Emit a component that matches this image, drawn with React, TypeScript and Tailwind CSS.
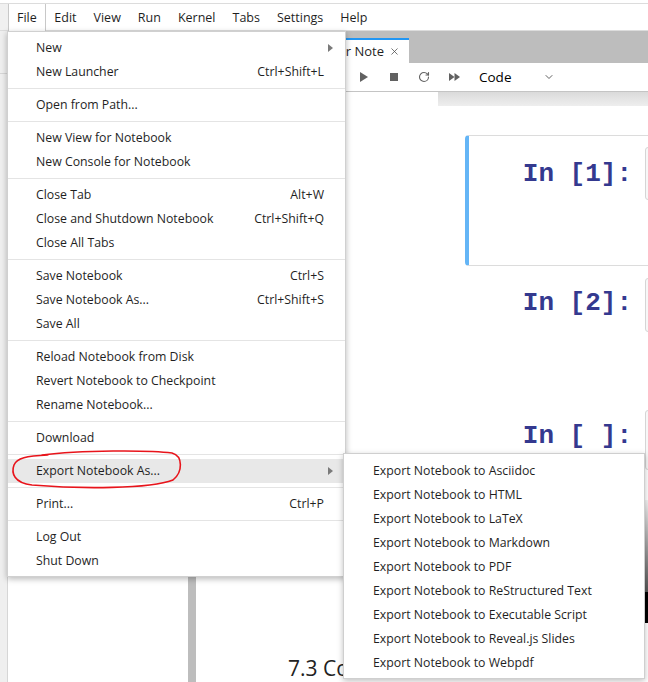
import { RotateCw, ChevronDown, X, Save, Plus, Scissors, Copy, Clipboard } from "lucide-react";

const menuBar = ["Edit", "View", "Run", "Kernel", "Tabs", "Settings", "Help"];

type Item = { label: string; shortcut?: string; submenu?: boolean; active?: boolean } | "sep";

const fileMenu: Item[] = [
  { label: "New", submenu: true },
  { label: "New Launcher", shortcut: "Ctrl+Shift+L" },
  "sep",
  { label: "Open from Path..." },
  "sep",
  { label: "New View for Notebook" },
  { label: "New Console for Notebook" },
  "sep",
  { label: "Close Tab", shortcut: "Alt+W" },
  { label: "Close and Shutdown Notebook", shortcut: "Ctrl+Shift+Q" },
  { label: "Close All Tabs" },
  "sep",
  { label: "Save Notebook", shortcut: "Ctrl+S" },
  { label: "Save Notebook As...", shortcut: "Ctrl+Shift+S" },
  { label: "Save All" },
  "sep",
  { label: "Reload Notebook from Disk" },
  { label: "Revert Notebook to Checkpoint" },
  { label: "Rename Notebook..." },
  "sep",
  { label: "Download" },
  "sep",
  { label: "Export Notebook As...", submenu: true, active: true },
  "sep",
  { label: "Print...", shortcut: "Ctrl+P" },
  "sep",
  { label: "Log Out" },
  { label: "Shut Down" },
];

const exportFormats = [
  "Asciidoc",
  "HTML",
  "LaTeX",
  "Markdown",
  "PDF",
  "ReStructured Text",
  "Executable Script",
  "Reveal.js Slides",
  "Webpdf",
];

const Caret = () => (
  <svg width="5" height="8" viewBox="0 0 5 8" className="shrink-0">
    <polygon points="0,0 5,4 0,8" fill="#7a7a7a" />
  </svg>
);

const ToolButton = ({ children }: { children: React.ReactNode }) => (
  <div className="flex h-full w-[30px] shrink-0 items-center justify-center text-[#616161]">{children}</div>
);

const Cell = ({ prompt, promptTop, inputTop, inputHeight }: { prompt: string; promptTop: string; inputTop: string; inputHeight: string }) => (
  <div className="flex">
    <div className={`w-[163px] shrink-0 text-right font-['Liberation_Mono',monospace] text-[26px] font-bold leading-[30px] text-[#34398f] ${promptTop}`}>
      {prompt}
    </div>
    <div className={`ml-[13px] w-[300px] shrink-0 rounded-[3px] border border-[#d5d5d5] bg-[#f7f7f7] ${inputTop} ${inputHeight}`} />
  </div>
);

export default function App() {
  return (
    <div className="relative h-[682px] w-[648px] overflow-hidden bg-white font-['Open_Sans',sans-serif] text-[12.3px] text-[#1f1f1f]">
      {/* Menu bar */}
      <div className="flex h-[31px] flex-col bg-white">
        <div className="h-[3px]" />
        <div className="flex flex-1 items-stretch border-t border-b border-[#dcdcdc] text-[12.5px]">
          <div className="w-[8px] shrink-0 bg-[#f0f0f0]" />
          <div className="z-10 -mb-px flex items-center border-x border-[#c8c8c8] bg-white px-[8px] pt-[2px]">File</div>
          {menuBar.map((m) => (
            <div key={m} className="flex items-center px-[8.5px] pt-[2px]">
              {m}
            </div>
          ))}
        </div>
      </div>

      {/* Workspace */}
      <div className="flex h-[651px]">
        <div className="w-[8px] shrink-0 border-r border-[#d6d6d6] bg-[#efefef]">
          <div className="mt-[42px] h-px bg-[#d6d6d6]" />
        </div>
        <div className="w-[180px] shrink-0 bg-white" />
        <div className="w-[8px] shrink-0 bg-[#bdbdbd]" />

        <div className="flex min-w-0 flex-1 flex-col overflow-hidden">
          {/* Tab bar */}
          <div className="flex h-[32px] shrink-0 items-end bg-[#bdbdbd]">
            <div className="ml-[50px] flex h-[25px] w-[163px] shrink-0 items-center justify-end gap-[5px] border-t-2 border-[#2196f3] bg-white pr-[9px] text-[13px]">
              <span>Jupyter Note</span>
              <X size={11} strokeWidth={1.6} className="text-[#444]" />
            </div>
          </div>

          {/* Toolbar */}
          <div className="flex h-[29px] shrink-0 items-center border-b border-[#c4c4c4] bg-white pl-[3px]">
            <ToolButton><Save size={13} /></ToolButton>
            <ToolButton><Plus size={13} /></ToolButton>
            <ToolButton><Scissors size={13} /></ToolButton>
            <ToolButton><Copy size={13} /></ToolButton>
            <ToolButton><Clipboard size={13} /></ToolButton>
            <ToolButton>
              <svg width="8" height="10" viewBox="0 0 8 10"><polygon points="0,0 8,5 0,10" fill="#616161" /></svg>
            </ToolButton>
            <ToolButton>
              <div className="h-[8px] w-[8px] bg-[#616161]" />
            </ToolButton>
            <ToolButton><RotateCw size={12} strokeWidth={2.2} /></ToolButton>
            <ToolButton>
              <svg width="11" height="8" viewBox="0 0 11 8">
                <polygon points="0,0 5.5,4 0,8" fill="#616161" />
                <polygon points="5.5,0 11,4 5.5,8" fill="#616161" />
              </svg>
            </ToolButton>
            <div className="ml-[10px] flex w-[76px] shrink-0 items-center justify-between text-[13.5px] text-black">
              <span>Code</span>
              <ChevronDown size={12} strokeWidth={2} className="text-[#616161]" />
            </div>
          </div>

          {/* Notebook */}
          <div className="flex-1">
            <div className="ml-[242px] h-[14px] bg-gradient-to-b from-[#dadada] to-[#eeeeee]" />
            <div className="ml-[269px] mt-[29px] h-[131px] w-[500px] rounded-l-[4px] border-y border-l-4 border-y-[#dcdcdc] border-l-[#64b5f6]">
              <Cell prompt="In [1]:" promptTop="mt-[23px]" inputTop="mt-[11px]" inputHeight="h-[53px]" />
            </div>
            <div className="ml-[273px] mt-[12px]">
              <Cell prompt="In [2]:" promptTop="mt-[10px]" inputTop="mt-0" inputHeight="h-[54px]" />
            </div>
            <div className="ml-[273px] mt-[78px]">
              <Cell prompt="In [ ]:" promptTop="mt-[11px]" inputTop="mt-0" inputHeight="h-[60px]" />
              <div className="ml-[176px] mt-[30px] h-[92px] w-[300px] bg-gradient-to-b from-[#f4f4f4] to-[#555555]" />
              <div className="ml-[176px] h-[31px] w-[300px] bg-black" />
            </div>
            {/* heading continues under the submenu */}
            <div className="ml-[92px] mt-[31px] w-[55px] overflow-hidden whitespace-nowrap text-[21px] leading-[28px] text-[#222]">7.3 Conclusion</div>
          </div>
        </div>
      </div>

      {/* File menu */}
      <div className="absolute left-[7px] top-[31px] z-20 w-[339px] border border-[#d0d0d0] bg-white pb-[3px] pt-[4px] shadow-[0_2px_6px_rgba(0,0,0,0.28)]">
        {fileMenu.map((item, i) =>
          item === "sep" ? (
            <div key={i} className="flex h-[9px] items-center">
              <div className="h-px w-full bg-[#e4e4e4]" />
            </div>
          ) : (
            <div
              key={i}
              className={`flex h-[24px] items-center justify-between pl-[28px] pr-[21px] ${item.active ? "bg-[#e8e8e8]" : ""}`}
            >
              <span>{item.label}</span>
              {item.shortcut && <span>{item.shortcut}</span>}
              {item.submenu && (
                <span className="-mr-[9px]">
                  <Caret />
                </span>
              )}
            </div>
          )
        )}
      </div>

      {/* Export submenu */}
      <div className="absolute left-[343px] top-[453px] z-30 w-[302px] border border-[#cfcfcf] bg-white pb-[3px] pt-[5px] shadow-[0_2px_6px_rgba(0,0,0,0.25)]">
        {exportFormats.map((f) => (
          <div key={f} className="flex h-[24px] items-center pl-[29px]">
            Export Notebook to {f}
          </div>
        ))}
      </div>

      {/* Red annotation around the highlighted item */}
      <svg className="pointer-events-none absolute left-0 top-0 z-40" width="648" height="682">
        <path
          d="M 42 455 C 80 450, 150 450, 172 453 C 183 456, 183 472, 173 480 C 150 489, 80 489, 32 485 C 14 483, 11 473, 14 465 C 17 458, 26 456, 48 455"
          fill="none"
          stroke="#e8141b"
          strokeWidth="1.6"
          strokeLinecap="round"
        />
      </svg>
    </div>
  );
}
